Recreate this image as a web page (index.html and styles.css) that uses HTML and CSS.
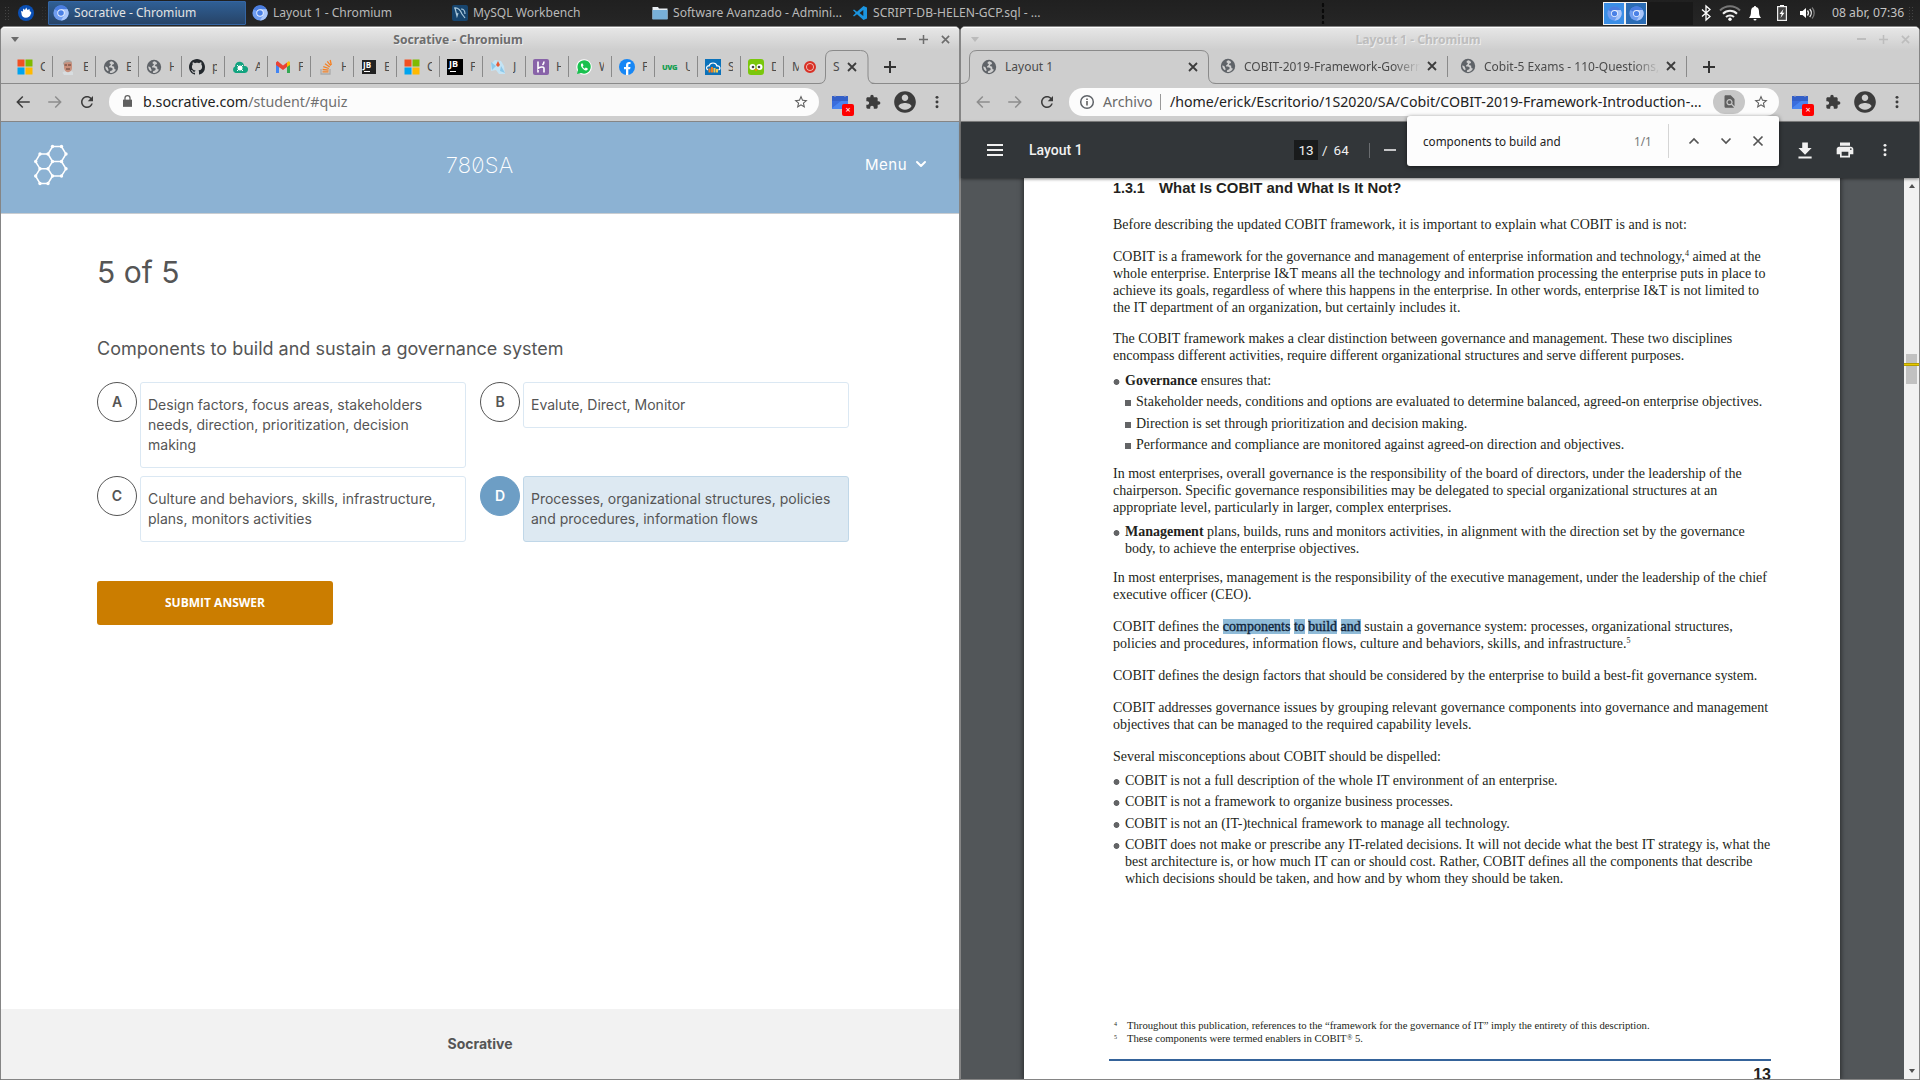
FILE: index.html
```html
<!DOCTYPE html>
<html lang="es">
<head>
<meta charset="utf-8">
<title>Escritorio</title>
<link rel="stylesheet" href="styles.css">
</head>
<body>
<svg class="defs" width="0" height="0">
  <symbol id="chromium" viewBox="0 0 16 16"><circle cx="8" cy="8" r="7.6" fill="#6f9df0"/><path d="M8 8 1.4 4.2A7.6 7.6 0 0 1 14.6 4.2L8 4.2z" fill="#4a7de0"/><path d="M8 4.2h6.6A7.6 7.6 0 0 1 8 15.6L11.3 10z" fill="#a9c6fa"/><circle cx="8" cy="8" r="3.7" fill="#eaf1ff"/><circle cx="8" cy="8" r="2.8" fill="#4a80e6"/></symbol>
  <symbol id="globe" viewBox="0 0 16 16"><circle cx="8" cy="8" r="7.2" fill="#5f6368"/><path d="M8.6 2.3c-1 .4-1.9.4-2.1 1.6-.1.8 1.6.8 1.4 1.9-.2 1-1.9.9-1.9 2.2 0 .9 2.6.5 3.4 1.2.9.8-.2 2.3-1.4 2.5-.8.2-1.4 1-1 2 .3.6 1.300.4 1.800.2 2-.5 3.400-1.700 4.200-3.500-.8.2-1.400 0-1.700-.8-.4-1 .3-1.300-.3-2-.6-.5-1.900-.2-2-1.200-.1-1.200 1.700-.8 2-1.600.3-.9-1.200-2.200-2.400-2.500zM2.200 7.400c.7-.1 1.700.3 2.400 1 .6.600.2 1.300.7 1.800.5.500.4 1.400-.3 2-1.400-.8-2.700-2.700-2.800-4.800z" fill="#cecece"/></symbol>
  <symbol id="back" viewBox="0 0 24 24"><path d="M21 11H6.830l5.590-5.590L11 4l-8 8 8 8 1.410-1.410L6.830 13H21v-2z"/></symbol>
  <symbol id="forward" viewBox="0 0 24 24"><path d="M3 11h14.170l-5.590-5.590L13 4l8 8-8 8-1.410-1.410L17.170 13H3v-2z"/></symbol>
  <symbol id="reload" viewBox="0 0 24 24"><path d="M17.650 6.350C16.200 4.900 14.210 4 12 4c-4.420 0-7.990 3.580-7.990 8s3.570 8 7.990 8c3.730 0 6.840-2.550 7.730-6h-2.080c-.82 2.330-3.040 4-5.650 4-3.310 0-6-2.690-6-6s2.690-6 6-6c1.660 0 3.140.69 4.220 1.780L13 11h7V4l-2.350 2.350z"/></symbol>
  <symbol id="star" viewBox="0 0 24 24"><path d="M22 9.240l-7.190-.62L12 2 9.190 8.630 2 9.240l5.460 4.730L5.820 21 12 17.270 18.180 21l-1.630-7.030L22 9.240zM12 15.400l-3.760 2.270 1-4.280-3.320-2.880 4.380-.38L12 6.100l1.710 4.040 4.380.38-3.320 2.880 1 4.280L12 15.400z"/></symbol>
  <symbol id="puzzle" viewBox="0 0 24 24"><path d="M20.500 11H19V7c0-1.100-.9-2-2-2h-4V3.500C13 2.120 11.880 1 10.500 1S8 2.120 8 3.500V5H4c-1.100 0-1.990.9-1.990 2v3.800H3.500c1.490 0 2.700 1.210 2.700 2.700s-1.210 2.700-2.700 2.700H2V20c0 1.100.9 2 2 2h3.800v-1.500c0-1.490 1.210-2.700 2.700-2.700 1.490 0 2.700 1.210 2.700 2.700V22H17c1.100 0 2-.9 2-2v-4h1.500c1.380 0 2.500-1.120 2.500-2.500S21.880 11 20.500 11z"/></symbol>
  <symbol id="person" viewBox="0 0 24 24"><path d="M12 2C6.480 2 2 6.480 2 12s4.480 10 10 10 10-4.480 10-10S17.520 2 12 2zm0 3c1.660 0 3 1.340 3 3s-1.340 3-3 3-3-1.340-3-3 1.340-3 3-3zm0 14.200c-2.500 0-4.710-1.280-6-3.220.03-1.990 4-3.080 6-3.080 1.990 0 5.970 1.090 6 3.080-1.290 1.940-3.500 3.220-6 3.220z"/></symbol>
  <symbol id="dots" viewBox="0 0 16 16"><circle cx="8" cy="2.700" r="1.700"/><circle cx="8" cy="8" r="1.700"/><circle cx="8" cy="13.300" r="1.700"/></symbol>
  <symbol id="close" viewBox="0 0 10 10"><path d="M1 1l8 8M9 1L1 9" fill="none" stroke="currentColor" stroke-width="1.800"/></symbol>
  <symbol id="plus" viewBox="0 0 12 12"><path d="M6 0v12M0 6h12" fill="none" stroke="currentColor" stroke-width="2"/></symbol>
  <symbol id="calendar" viewBox="0 0 16 16"><path d="M0 2h16v13H0z" fill="#4a86f0"/><path d="M0 2h16v5H0z" fill="#3460c8"/><path d="M0 7h9l-9 7z" fill="#3a6ddd"/><path d="M3 1v2M13 1v2" stroke="#aab"/></symbol>
  <symbol id="ms" viewBox="0 0 16 16"><path d="M.5.5h7v7h-7z" fill="#f25022"/><path d="M8.500.5h7v7h-7z" fill="#7fba00"/><path d="M.5 8.500h7v7h-7z" fill="#00a4ef"/><path d="M8.500 8.500h7v7h-7z" fill="#ffb900"/></symbol>
</svg>

<header class="panel">
  <span class="grip"></span>
  <svg class="whisker" viewBox="0 0 16 16"><circle cx="8" cy="8" r="8" fill="#0a4fb4"/><path d="M3 6l2 .5.2-3L7 5l1.200-2.500L9.500 5l2-1 .3 2.200c1.500.5 2 1.800 1 2.800-.7 2.500-2.500 3.800-4.800 3.800C5 12.800 3.500 11 3.500 8.500z" fill="#fff"/></svg>
  <span class="grip faint"></span>
  <nav class="tasks">
    <a class="task on"><svg><use href="#chromium"/></svg><span>Socrative - Chromium</span></a>
    <a class="task"><svg><use href="#chromium"/></svg><span>Layout 1 - Chromium</span></a>
    <a class="task"><svg viewBox="0 0 16 16"><rect width="16" height="16" rx="2" fill="#17456e"/><path d="M2 3c4-1 6 1 8 6l3 4M3 3l2 8 1-3M9 4c3 0 4 2 4 5" fill="none" stroke="#a9c8dc" stroke-width="1.200"/></svg><span>MySQL Workbench</span></a>
    <a class="task"><svg viewBox="0 0 16 16"><path d="M.5 2H6l1 1.500h8.500V14H.5z" fill="#e8eef3"/><path d="M.5 5h15v9.500H.5z" fill="#78b0d8"/></svg><span>Software Avanzado - Admini...</span></a>
    <a class="task"><svg viewBox="0 0 16 16"><path d="M11.500 1 15 2.500v11L11.500 15 5 9.300 2 11.500 1 10.800 3.700 8 1 5.200l1-.7 3 2.200zM11.300 5 7.500 8l3.800 3z" fill="#1b95e0" fill-rule="evenodd"/></svg><span>SCRIPT-DB-HELEN-GCP.sql - ...</span></a>
  </nav>
  <span class="handle"></span>
  <div class="pager"><i class="now"><svg><use href="#chromium"/></svg></i><i class="next"><svg><use href="#chromium"/></svg></i><i class="empty"></i></div>
  <div class="tray">
    <svg class="bt" viewBox="0 0 10 16"><path d="M1 4.500 9 11.500 5 15V1l4 3.500-8 7" fill="none" stroke="#fff" stroke-width="1.300"/></svg>
    <svg class="wifi" viewBox="0 0 22 16"><g fill="none" stroke-width="2"><path d="M1 5.500a14 14 0 0 1 20 0" stroke="#777"/><path d="M4 8.800a9.800 9.800 0 0 1 14 0M7 12a5.800 5.800 0 0 1 8 0" stroke="#eee"/></g><circle cx="11" cy="14.300" r="1.700" fill="#fff"/></svg>
    <svg class="bell" viewBox="0 0 12 16"><path d="M6 1c.7 0 1 .4 1 1 2.200.5 3 2.300 3 4.500 0 3 .5 4.500 2 6.500H0c1.500-2 2-3.500 2-6.500C2 4.300 2.800 2.500 5 2c0-.6.3-1 1-1zM4.500 14h3a1.500 1.500 0 0 1-3 0z" fill="#fff"/></svg>
    <svg class="batt" viewBox="0 0 10 16"><path d="M3 0h4v1.500H3z" fill="#fff"/><rect x=".6" y="1.600" width="8.800" height="13.800" fill="#444" stroke="#eee" stroke-width="1.200"/><path d="M6.500 4 2.500 9h2.200L3.500 13l4-5.200H5.300z" fill="#fff"/></svg>
    <svg class="vol" viewBox="0 0 16 14"><path d="M0 5h2.500L6 2v10L2.500 9H0z" fill="#fff"/><g fill="none" stroke-width="1.300"><path d="M7.500 4.500a4 4 0 0 1 0 5M9.700 3a6 6 0 0 1 0 8" stroke="#eee"/><path d="M12 1.500a8 8 0 0 1 0 11" stroke="#777"/></g></svg>
    <time>08 abr, 07:36</time>
    <span class="grip"></span>
  </div>
</header>

<main class="desk">
<section class="win left">
  <div class="titlebar"><i class="tri"></i><b>Socrative - Chromium</b><div class="wbtns"><i class="wmin"></i><svg><use href="#plus"/></svg><svg><use href="#close"/></svg></div></div>
  <div class="tabs">
    <div class="mini"><svg><use href="#ms"/></svg><span>C</span></div>
    <div class="mini"><svg viewBox="0 0 16 16"><path d="M4 16c-1-2-2-2-1-3l3-1h5l2 1v3z" fill="#d8dde0"/><path d="M4 4c0-3 8-3 8 0v5c0 5-7 6-8 0z" fill="#c98f7b"/><path d="M3 6c-1-6 10-7 9-1L11 3 5 3.500z" fill="#aaa6a2"/><path d="M4.500 6h2.500M8 6h3M6 10h4" stroke="#5c3c34"/></svg><span>E</span></div>
    <div class="mini"><svg><use href="#globe"/></svg><span>E</span></div>
    <div class="mini"><svg><use href="#globe"/></svg><span>H</span></div>
    <div class="mini"><svg viewBox="0 0 16 16"><path d="M8 0C3.580 0 0 3.580 0 8c0 3.540 2.290 6.530 5.470 7.590.4.070.55-.17.55-.38 0-.19-.01-.82-.01-1.490-2.010.37-2.530-.49-2.690-.94-.09-.23-.48-.94-.82-1.130-.28-.15-.68-.52-.01-.53.630-.01 1.080.58 1.230.82.720 1.210 1.870.87 2.330.66.070-.52.280-.87.510-1.070-1.780-.2-3.640-.89-3.640-3.950 0-.87.310-1.590.82-2.150-.08-.2-.36-1.020.08-2.120 0 0 .67-.21 2.200.82.640-.18 1.320-.27 2-.27s1.360.09 2 .27c1.530-1.040 2.200-.82 2.200-.82.440 1.100.16 1.920.08 2.120.510.56.82 1.270.82 2.150 0 3.070-1.870 3.750-3.650 3.950.290.25.540.73.540 1.480 0 1.070-.01 1.930-.01 2.200 0 .21.150.46.550.38A8.010 8.010 0 0 0 16 8c0-4.420-3.580-8-8-8z" fill="#24292e"/></svg><span>p</span></div>
    <div class="mini"><svg viewBox="0 0 16 16"><path d="M3.500 14a3.500 3.500 0 0 1-.5-6.500C3 4 6 2 9 3c2 .6 3 2 3 4 3-.3 4.500 2 4 4-.4 2-1.500 3-3.500 3z" fill="#12a37f"/><circle cx="8" cy="9" r="2.500" fill="#fff"/><path d="M5 6l6 6M11 6l-6 6" stroke="#fff"/></svg><span>A</span></div>
    <div class="mini"><svg viewBox="0 0 16 16"><path d="M1 3v11h3V7z" fill="#4285f4"/><path d="M15 3v11h-3V7z" fill="#34a853"/><path d="M1 3.500 2.500 2 8 6.500 12 3.500V8l-4 3-7-5z" fill="#ea4335"/><path d="M12 3.500 14 2l1 1.500V6l-3 2z" fill="#fbbc04"/></svg><span>F</span></div>
    <div class="mini"><svg viewBox="0 0 16 16"><path d="M3 10v5h9v-5" fill="none" stroke="#aaa" stroke-width="1.300"/><path d="M4.500 12.800h6M4.600 10.500l6 .7M5.300 7.600l5.500 1.900M7 4.800l4.700 3.200M9.300 2.400l3.400 4.300M12.200 1l1.100 5" stroke="#f48024" stroke-width="1.300" fill="none"/></svg><span>H</span></div>
    <div class="mini"><i class="jb small">JB</i><span>E</span></div>
    <div class="mini"><svg><use href="#ms"/></svg><span>C</span></div>
    <div class="mini"><i class="jb">JB</i><span>F</span></div>
    <div class="mini"><svg viewBox="0 0 16 16"><path d="M1 5l4-4 6 1 3 5 1 8H9L6 11 1 12z" fill="#c4e4f5"/><path d="M1 3l5 4-4 4M11 7l-1 5 5 2" fill="#8cc8ea"/><path d="M6 6l2-4 2 4-2 2z" fill="#e65a35"/></svg><span>J</span></div>
    <div class="mini"><svg viewBox="0 0 16 16"><rect width="16" height="16" rx="2" fill="#8863a8"/><path d="M5 2.500v7c1.500-1.300 6-2.500 6 0v4M11 2.500C11 4 10.500 5 9.500 6M5 11v2.500" fill="none" stroke="#fff" stroke-width="1.600"/></svg><span>H</span></div>
    <div class="mini"><svg viewBox="0 0 16 16"><circle cx="8" cy="8" r="7.800" fill="#fff"/><path d="M1 15l1-4C0 5 4 1.300 8.300 1.300c9 .4 8.500 13-.3 13.400l-3-.7z" fill="#19c14f"/><path d="M5.500 4.500c-2 2 1.500 6.500 4.500 7 1.500 0 2-1.500 1.700-2L9.800 8.600l-.9 1C8 9.400 6.900 8.200 6.700 7.400l.8-.9-.8-2z" fill="#fff"/></svg><span>W</span></div>
    <div class="mini"><svg viewBox="0 0 16 16"><circle cx="8" cy="8" r="8" fill="#1787f5"/><path d="M7 16v-5.700H5V8h2V6.300C7 4.100 8.300 3 10 3l1.500.1V5h-1C9.600 5 9.300 5.500 9.300 6.200V8h2.200l-.4 2.300H9.300V16z" fill="#fff"/></svg><span>F</span></div>
    <div class="mini"><i class="uvg">UVG</i><span>U</span></div>
    <div class="mini"><svg viewBox="0 0 16 16"><rect width="16" height="16" fill="#0b72ba"/><path d="M3 11C.5 10 1.500 6.500 4 7c1-4 7-4 8 0 3-.5 4 3 1.500 4" fill="none" stroke="#fff" stroke-width="1.200"/><path d="M4.500 9.500v4M7 8v5.500" stroke="#ee7d23" stroke-width="2"/><path d="M9.500 9v4.500M12 10v3.500" stroke="#f7c94b" stroke-width="2"/></svg><span>S</span></div>
    <div class="mini"><svg viewBox="0 0 16 16"><rect width="16" height="16" rx="3" fill="#7ac70c"/><circle cx="4.500" cy="8" r="3" fill="#fff"/><circle cx="11.500" cy="8" r="3" fill="#fff"/><circle cx="5" cy="8" r="1.300" fill="#444"/><circle cx="11" cy="8" r="1.300" fill="#444"/><path d="M6 10h4l-2 2.500z" fill="#f49000"/></svg><span>D</span></div>
    <div class="mini rec"><span>M</span><i></i></div>
    <div class="live narrow"><svg class="edge" viewBox="0 0 53 34"><path d="M0 33.500Q6.500 33.500 6.500 26V8Q6.500.5 14 .5H41.500Q49 .5 49 8V26Q49 33.500 53 33.500V34H0z" fill="#cecece"/><path d="M0 33.500Q6.500 33.500 6.500 26V8Q6.500.5 14 .5H41.500Q49 .5 49 8V26Q49 33.500 56 33.500" fill="none" stroke="#8a8a8a"/></svg><span>S</span><svg class="x"><use href="#close"/></svg></div>
    <svg class="add"><use href="#plus"/></svg>
  </div>
  <div class="toolbar">
    <svg class="nav"><use href="#back"/></svg><svg class="nav off"><use href="#forward"/></svg><svg class="nav"><use href="#reload"/></svg>
    <div class="omni"><svg class="lock" viewBox="0 0 10 13"><path d="M0 5h10v8H0z"/><path d="M2.200 6V3.300a2.800 2.800 0 0 1 5.600 0V6" fill="none" stroke="#5f5f5f" stroke-width="1.400"/></svg><span class="url">b.socrative.com<em>/student/#quiz</em></span><svg class="fav"><use href="#star"/></svg></div>
    <div class="ext"><svg><use href="#calendar"/></svg><i>×</i></div><svg class="puz"><use href="#puzzle"/></svg><svg class="who"><use href="#person"/></svg><svg class="more"><use href="#dots"/></svg>
  </div>
  <div class="soc-head">
    <svg class="logo" viewBox="0 0 34 42"><g fill="none" stroke="#fff" stroke-width="1.500"><path d="M18.500 2.500h9l4.500 7.500-4.500 7.500h-9L14 10zM6 10h8l4.500 7.500L14 24.800H6L1.500 17.500zM27.500 17.500 32 24.800 27.500 32h-9L14 24.800M18.500 32 14 39.500H6L1.500 32 6 24.800"/></g><g fill="#fff"><circle cx="18.500" cy="2.500" r="1.700"/><circle cx="27.500" cy="2.500" r="1.700"/><circle cx="32" cy="10" r="1.700"/><circle cx="27.500" cy="17.500" r="1.700"/><circle cx="18.500" cy="17.500" r="1.700"/><circle cx="14" cy="10" r="1.700"/><circle cx="6" cy="10" r="1.700"/><circle cx="1.700" cy="17.500" r="1.700"/><circle cx="6" cy="24.800" r="1.700"/><circle cx="14" cy="24.800" r="1.700"/><circle cx="32" cy="24.800" r="1.700"/><circle cx="27.500" cy="32" r="1.700"/><circle cx="18.500" cy="32" r="1.700"/><circle cx="14" cy="39.500" r="1.700"/><circle cx="6" cy="39.500" r="1.700"/><circle cx="1.700" cy="32" r="1.700"/></g></svg>
    <span class="room">780SA</span>
    <span class="menu">Menu<svg viewBox="0 0 10 7"><path d="M1 1l4 4 4-4" fill="none" stroke="#fff" stroke-width="2" stroke-linecap="round" stroke-linejoin="round"/></svg></span>
  </div>
  <div class="quiz">
    <h1>5 of 5</h1>
    <p class="ask">Components to build and sustain a governance system</p>
    <div class="answers">
      <div class="ans"><b>A</b><div>Design factors, focus areas, stakeholders<br>needs, direction, prioritization, decision<br>making</div></div>
      <div class="ans"><b>B</b><div>Evalute, Direct, Monitor</div></div>
      <div class="ans"><b>C</b><div>Culture and behaviors, skills, infrastructure,<br>plans, monitors activities</div></div>
      <div class="ans picked"><b>D</b><div>Processes, organizational structures, policies<br>and procedures, information flows</div></div>
    </div>
    <button class="submit">SUBMIT ANSWER</button>
  </div>
  <footer class="soc-foot">Socrative</footer>
</section>

<section class="win right">
  <div class="titlebar"><i class="tri"></i><b>Layout 1 - Chromium</b><div class="wbtns"><i class="wmin"></i><svg><use href="#plus"/></svg><svg><use href="#close"/></svg></div></div>
  <div class="tabs">
    <div class="live wide"><svg class="edge" viewBox="0 0 254 34"><path d="M0 33.500Q8.500 33.500 8.500 26V8Q8.500.5 16 .5H240Q247.500.5 247.500 8V26Q247.500 33.500 254 33.500V34H0z" fill="#cecece"/><path d="M0 33.500Q8.500 33.500 8.500 26V8Q8.500.5 16 .5H240Q247.500.5 247.500 8V26Q247.500 33.500 255 33.500" fill="none" stroke="#8a8a8a"/></svg><svg class="ico"><use href="#globe"/></svg><span>Layout 1</span><svg class="x"><use href="#close"/></svg></div>
    <div class="tab"><svg class="ico"><use href="#globe"/></svg><span>COBIT-2019-Framework-Governance</span><svg class="x"><use href="#close"/></svg></div>
    <div class="tab third"><svg class="ico"><use href="#globe"/></svg><span>Cobit-5 Exams - 110-Questions, answers</span><svg class="x"><use href="#close"/></svg></div>
    <svg class="add"><use href="#plus"/></svg>
  </div>
  <div class="toolbar">
    <svg class="nav off"><use href="#back"/></svg><svg class="nav off"><use href="#forward"/></svg><svg class="nav"><use href="#reload"/></svg>
    <div class="omni"><svg class="info" viewBox="0 0 16 16"><circle cx="8" cy="8" r="6.300" fill="none" stroke="#5f6368" stroke-width="1.500"/><path d="M7.200 7h1.600v4.500H7.200zM7.200 4.500h1.600V6H7.200z"/></svg><span class="scheme">Archivo</span><span class="url path">/home/erick/Escritorio/1S2020/SA/Cobit/COBIT-2019-Framework-Introduction-...</span><span class="pill"><svg viewBox="0 0 24 24"><path d="M20 19.590V8l-6-6H6c-1.100 0-1.990.9-1.990 2L4 20c0 1.100.89 2 1.990 2H18c.45 0 .85-.15 1.190-.4l-4.430-4.430c-.8.520-1.740.830-2.760.830-2.760 0-5-2.240-5-5s2.240-5 5-5 5 2.240 5 5c0 1.020-.31 1.960-.83 2.750L20 19.590zM9 13c0 1.660 1.340 3 3 3s3-1.340 3-3-1.340-3-3-3-3 1.340-3 3z"/></svg></span><svg class="fav"><use href="#star"/></svg></div>
    <div class="ext"><svg><use href="#calendar"/></svg><i>×</i></div><svg class="puz"><use href="#puzzle"/></svg><svg class="who"><use href="#person"/></svg><svg class="more"><use href="#dots"/></svg>
  </div>
  <div class="pdf-bar">
    <i class="burger"></i><b>Layout 1</b>
    <div class="pages"><span class="cur">13</span><span class="of">/</span><span>64</span></div><i class="vline"></i><i class="minus"></i>
    <div class="actions"><svg viewBox="0 0 24 24"><path d="M19 9h-4V3H9v6H5l7 7 7-7zM5 18v2h14v-2H5z" transform="translate(-1.500 -.5) scale(1.130)"/></svg><svg viewBox="0 0 24 24"><path d="M19 8H5c-1.660 0-3 1.340-3 3v6h4v4h12v-4h4v-6c0-1.660-1.340-3-3-3zm-3 11H8v-5h8v5zm3-7c-.55 0-1-.45-1-1s.45-1 1-1 1 .45 1 1-.45 1-1 1zm-1-9H6v4h12V3z"/></svg><svg class="kebab"><use href="#dots"/></svg></div>
  </div>
  <div class="find"><span>components to build and</span><em>1/1</em><i></i><svg viewBox="0 0 10 10"><path d="M.5 7.500 5 3l4.500 4.500"/></svg><svg viewBox="0 0 10 10"><path d="M.5 2.500 5 7l4.500-4.500"/></svg><svg viewBox="0 0 10 10"><path d="M.5.5l9 9M9.500.5l-9 9"/></svg></div>
  <div class="viewer">
    <article class="page">
      <h2><span>1.3.1</span>What Is COBIT and What Is It Not?</h2>
      <p class="g16">Before describing the updated COBIT framework, it is important to explain what COBIT is and is not:</p>
      <p class="g15">COBIT is a framework for the governance and management of enterprise information and technology,<sup>4</sup> aimed at the<br>whole enterprise. Enterprise I&amp;T means all the technology and information processing the enterprise puts in place to<br>achieve its goals, regardless of where this happens in the enterprise. In other words, enterprise I&amp;T is not limited to<br>the IT department of an organization, but certainly includes it.</p>
      <p class="g15">The COBIT framework makes a clear distinction between governance and management. These two disciplines<br>encompass different activities, require different organizational structures and serve different purposes.</p>
      <p class="dot g7"><b>Governance</b> ensures that:</p>
      <p class="sq g5">Stakeholder needs, conditions and options are evaluated to determine balanced, agreed-on enterprise objectives.</p>
      <p class="sq g5">Direction is set through prioritization and decision making.</p>
      <p class="sq g5">Performance and compliance are monitored against agreed-on direction and objectives.</p>
      <p class="g12">In most enterprises, overall governance is the responsibility of the board of directors, under the leadership of the<br>chairperson. Specific governance responsibilities may be delegated to special organizational structures at an<br>appropriate level, particularly in larger, complex enterprises.</p>
      <p class="dot g7"><b>Management</b> plans, builds, runs and monitors activities, in alignment with the direction set by the governance<br>body, to achieve the enterprise objectives.</p>
      <p class="g12">In most enterprises, management is the responsibility of the executive management, under the leadership of the chief<br>executive officer (CEO).</p>
      <p class="g15">COBIT defines the <mark>components</mark> <mark>to</mark> <mark>build</mark> <mark>and</mark> sustain a governance system: processes, organizational structures,<br>policies and procedures, information flows, culture and behaviors, skills, and infrastructure.<sup>5</sup></p>
      <p class="g15">COBIT defines the design factors that should be considered by the enterprise to build a best-fit governance system.</p>
      <p class="g15">COBIT addresses governance issues by grouping relevant governance components into governance and management<br>objectives that can be managed to the required capability levels.</p>
      <p class="g15">Several misconceptions about COBIT should be dispelled:</p>
      <p class="dot g7">COBIT is not a full description of the whole IT environment of an enterprise.</p>
      <p class="dot g5">COBIT is not a framework to organize business processes.</p>
      <p class="dot g5">COBIT is not an (IT-)technical framework to manage all technology.</p>
      <p class="dot g5">COBIT does not make or prescribe any IT-related decisions. It will not decide what the best IT strategy is, what the<br>best architecture is, or how much IT can or should cost. Rather, COBIT defines all the components that describe<br>which decisions should be taken, and how and by whom they should be taken.</p>
      <div class="notes"><p><sup>4</sup>Throughout this publication, references to the “framework for the governance of IT” imply the entirety of this description.</p><p><sup>5</sup>These components were termed enablers in COBIT<small>®</small> 5.</p></div>
      <div class="folio">13</div>
    </article>
    <div class="scroll"><i class="up"></i><i class="thumb"></i><i class="hit"></i><i class="down"></i></div>
  </div>
</section>
</main>
</body>
</html>
```
FILE: styles.css
```css
* { box-sizing: border-box; }
body { margin: 0; width: 1920px; height: 1080px; overflow: hidden; background: #232323; font-family: "Noto Sans", sans-serif; font-size: 13px; display: flex; flex-direction: column; }
svg { flex: none; display: block; overflow: visible; }
i, em { font-style: normal; }
.defs { position: absolute; }

/* desktop panel */
.panel { height: 26px; flex: none; display: flex; align-items: center; background: linear-gradient(#202020, #262626); color: #b9b9b9; }
.grip { width: 6px; height: 14px; margin-left: 4px; background: radial-gradient(circle, #444 .7px, transparent 1px) 0 0 / 3px 3px; }
.whisker { width: 16px; height: 16px; margin-left: 8px; }
.grip.faint { margin-left: 7px; margin-right: 1px; opacity: .4; }
.tasks { display: flex; width: 1000px; height: 24px; gap: 2px; font-size: 12.100px; }
.task { width: 198px; height: 24px; display: flex; align-items: center; gap: 5px; padding: 0 0 1px 4px; white-space: nowrap; line-height: 20px; }
.task svg { width: 16px; height: 16px; }
.task.on { background: linear-gradient(#2f5f95, #274468); border: 1px solid #3465a4; padding: 0 0 0 4px; color: #e4e4e4; border-radius: 1px; }
.handle { width: 4px; height: 22px; margin-left: 273px; background: radial-gradient(#0a0a0a 1.2px, transparent 1.6px) 0 0 / 4px 6px; }
.pager { display: flex; margin-left: 278px; height: 23px; }
.pager i { width: 22px; height: 23px; display: grid; place-items: center; border: 1px solid #f1f1f1; background: #3a8ee6; }
.pager i.next { background: #2a6cb5; }
.pager i.empty { width: 46px; border: 0; background: #191919; }
.pager svg { width: 15px; height: 15px; }
.tray { display: flex; align-items: center; margin-left: 8px; color: #c4c4c4; }
.bt { width: 10px; height: 16px; }
.wifi { width: 22px; height: 16px; margin-left: 8px; }
.bell { width: 12px; height: 16px; margin-left: 8px; }
.batt { width: 10px; height: 16px; margin-left: 16px; }
.vol { width: 16px; height: 14px; margin-left: 13px; }
.tray time { margin-left: 16px; white-space: nowrap; width: 72px; font-size: 12.200px; line-height: 20px; padding-bottom: 1px; }

/* window frame */
.desk { display: flex; height: 1054px; }
.win { width: 960px; height: 1054px; background: #cecece; border: 1px solid #858585; border-radius: 5px 5px 0 0; display: flex; flex-direction: column; position: relative; }
.titlebar { height: 23px; flex: none; display: flex; align-items: center; justify-content: space-between; background: linear-gradient(#e6e6e6, #cecece); border-top: 1px solid #fff; border-radius: 4px 4px 0 0; padding: 0 9px 0 10px; color: #6d6d6d; }
.titlebar b { font-size: 12.100px; text-shadow: 1px 1px #eee; padding-top: 1px; margin-left: 44px; margin-right: 44px; }
.tri { border: 4px solid transparent; border-top: 5px solid #6b6b6b; border-bottom: 0; margin-right: 0; }
.wbtns { display: flex; align-items: center; gap: 13px; }
.wbtns svg { width: 9px; height: 9px; }
.wmin { width: 9px; height: 2px; background: currentColor; }
.right .titlebar { color: #bdbdbd; }
.right .tri { border-top-color: #bbb; }
.titlebar .tri { flex: none; }
.titlebar b { position: static; }
.tabs { height: 34px; flex: none; display: flex; align-items: center; border-bottom: 1px solid #8a8a8a; color: #4b4b4b; font-size: 12px; }
.left .tabs { padding-left: 9px; }
.mini { width: 43px; height: 21px; border-right: 1px solid #8a8a8a; display: flex; align-items: center; padding: 0 0 0 7px; }
.mini svg { width: 16px; height: 16px; }
.mini span { width: 5px; margin-left: 7px; overflow: hidden; line-height: 21px; }
.jb { width: 16px; height: 16px; color: #fff; font: 700 9px/10px "Open Sans", sans-serif; padding-left: 2px; background: linear-gradient(#fff, #fff) 3px 12px / 6px 1px no-repeat #000; }
.jb.small { width: 14px; height: 14px; margin: 0 1px; font-size: 8px; padding-left: 1px; background-color: #222; background-position: 2px 11px; }
.uvg { width: 16px; font: 800 7.500px/16px "Open Sans", sans-serif; color: #16a052; letter-spacing: -.4px; }
.mini.rec { border: 0; padding-left: 6px; width: 42px; }
.mini.rec span { width: 7px; margin: 0 5px 0 2px; }
.mini.rec i { width: 12px; height: 12px; border-radius: 50%; background: #d93025; border: 2px solid #d93025; box-shadow: inset 0 0 0 1px #eebbb6; }
.live { position: relative; height: 34px; align-self: flex-start; display: flex; align-items: center; padding-bottom: 1px; }
.edge { position: absolute; left: 0; top: 0; height: 34px; z-index: 0; }
.live > :not(.edge) { position: relative; z-index: 1; }
.narrow { width: 53px; margin-left: -7px; }
.narrow .edge { width: 53px; }
.narrow span { margin-left: 14px; width: 8px; }
.narrow .x { margin-left: 6px; }
.x { width: 10px; height: 10px; color: #3c3c3c; }
.left .add { margin-left: 12px; }
.add { width: 12px; height: 12px; color: #333; }
.wide { width: 248px; }
.wide .edge { width: 254px; }
.ico { width: 16px; height: 16px; }
.wide .ico { margin-left: 20px; }
.live span, .tab span { white-space: nowrap; }
.wide span { margin-left: 8px; width: 183px; }
.tab { display: flex; align-items: center; width: 239px; height: 21px; border-right: 1px solid #8a8a8a; padding: 0 0 1px 11px; }
.tab span { margin-left: 8px; width: 176px; overflow: hidden; -webkit-mask-image: linear-gradient(90deg, #000 85%, transparent); mask-image: linear-gradient(90deg, #000 85%, transparent); }
.tab .x { margin-left: 7px; }
.tab.third { padding-left: 12px; }
.tab.third .x { margin-left: 6px; }
.right .add { margin-left: 16px; }
.toolbar { height: 38px; flex: none; display: flex; align-items: center; padding: 0 0 2px 12px; border-bottom: 1px solid #858585; fill: #3c3c3c; }
.nav { width: 20px; height: 20px; margin-right: 12px; padding: 1px; }
.nav.off { fill: #8d8d8d; }
.omni { width: 710px; height: 28px; border-radius: 14px; background: #fcfcfc; display: flex; align-items: center; fill: #5f5f5f; }
.lock { width: 9px; height: 12px; margin: 0 0 1px 14px; }
.url { font-size: 14.250px; line-height: 28px; margin-left: 11px; color: #222; flex: 1; white-space: nowrap; }
.url em { color: #707070; }
.fav { width: 16px; height: 16px; margin-right: 10px; }
.info { width: 16px; height: 16px; margin-left: 10px; }
.scheme { font-size: 14.200px; color: #6a6a6a; margin-left: 8px; padding-right: 6px; border-right: 1px solid #999; line-height: 16px; width: 58px; }
.url.path { margin-left: 9px; font-size: 14.180px; }
.pill { width: 32px; height: 24px; border-radius: 12px; background: #c7c7c7; display: grid; place-items: center; margin-right: 8px; }
.pill svg { width: 15px; height: 15px; }
.ext { width: 22px; height: 28px; margin-left: 13px; position: relative; }
.ext svg { width: 16px; height: 16px; margin-top: 6px; }
.ext i { position: absolute; left: 10px; top: 16px; width: 12px; height: 12px; border-radius: 2px; background: #f00; color: #fff; font: 9px/11px "Noto Sans", sans-serif; text-align: center; }
.puz { width: 16px; height: 16px; margin-left: 11px; }
.who { width: 26px; height: 26px; margin-left: 11px; }
.more { width: 14px; height: 14px; margin-left: 12px; }

/* quiz page */
.soc-head { height: 92px; flex: none; background: #8cb2d3; border-bottom: 1px solid #c9cdd1; display: flex; align-items: center; justify-content: space-between; padding: 0 33px 3px; color: #fff; font-family: Inter, sans-serif; }
.logo { width: 34px; height: 42px; margin-bottom: 3px; }
.room { font: 200 22px/30px Inter, sans-serif; font-feature-settings: "zero"; letter-spacing: .2px; margin-left: 26px; padding-bottom: 2px; }
.menu { display: flex; align-items: center; gap: 9px; font-size: 15px; letter-spacing: .5px; width: 61px; padding-bottom: 3px; }
.menu svg { width: 10px; height: 7px; }
.quiz { flex: 1; background: #fff; padding: 38px 0 0 96px; font-family: Inter, sans-serif; color: #555; }
h1 { font-size: 30px; font-weight: 400; line-height: 40px; margin: 0; }
.ask { margin: 42px 0 0; font-size: 18px; line-height: 30px; }
.answers { display: grid; grid-template-columns: 383px 369px; row-gap: 8px; margin-top: 18px; align-items: start; }
.ans { display: flex; gap: 3px; align-items: flex-start; }
.ans b { width: 40px; height: 40px; border: 1px solid #555; border-radius: 50%; display: grid; place-items: center; font-size: 14px; font-weight: 600; padding-bottom: 1px; }
.ans div { width: 326px; border: 1px solid #dbe8f3; border-radius: 3px; padding: 12px 7px; font-size: 14px; line-height: 20px; white-space: nowrap; }
.picked b { background: #6d9ec5; border-color: #6d9ec5; color: #fff; }
.picked div { background: #dde9f2; border-color: #c0d7e8; }
.submit { display: block; margin-top: 39px; width: 236px; height: 44px; border: 0; border-radius: 3px; background: #cb7d00; color: #fff; font: 700 12px/44px "Open Sans", sans-serif; padding: 0; }
.soc-foot { height: 70px; flex: none; background: #f2f2f2; font: 700 14px/70px Inter, sans-serif; color: #555; text-align: center; }

/* pdf viewer */
.pdf-bar { height: 56px; flex: none; background: #323639; color: #f1f1f1; display: flex; align-items: center; padding: 0 24px 0 26px; font: 13.500px Roboto, sans-serif; fill: #f1f1f1; position: relative; z-index: 2; box-shadow: 0 1px 3px rgba(0,0,0,.5); }
.pdf-bar b { font-weight: 500; font-size: 14px; margin-left: 26px; width: 265px; }
.burger { width: 16px; height: 12px; background: linear-gradient(#f1f1f1 2px, transparent 2px 5px, #f1f1f1 5px 7px, transparent 7px 10px, #f1f1f1 10px); }
.pages { display: flex; align-items: center; }
.cur { background: #191b1c; width: 24px; height: 20px; line-height: 20px; text-align: center; }
.of { margin: 0 6px 0 4px; }
.vline { width: 1px; height: 15px; background: #6a6d70; margin-left: 20px; }
.minus { width: 12px; height: 2px; background: #c5c6c7; margin-left: 14px; }
.actions { display: flex; gap: 20px; margin-left: auto; }
.actions svg { width: 20px; height: 20px; }
.actions .kebab { width: 14px; height: 14px; margin: 3px; }
.find { position: absolute; z-index: 3; left: 446px; top: 89px; width: 372px; height: 50px; background: #fdfdfd; border-radius: 3px; box-shadow: 0 1px 4px rgba(0,0,0,.55); display: flex; align-items: center; padding: 0 0 1px 16px; color: #222; font-size: 11.700px; }
.find span { width: 211px; flex: none; }
.find em { color: #777; width: 34px; flex: none; }
.find i { width: 1px; height: 34px; background: #d5d5d5; margin-right: 20px; flex: none; }
.find svg { width: 10px; height: 10px; margin-right: 22px; fill: none; stroke: #555; stroke-width: 1.700; }
.viewer { flex: 1; min-height: 0; background: #525659; display: flex; justify-content: space-between; overflow: hidden; }
.page { width: 816px; margin-left: 63px; padding: 0 0 0 89px; background: #fff; box-shadow: 0 0 5px 1px rgba(0,0,0,.5); font-family: "Liberation Serif", serif; font-size: 14px; line-height: 16.900px; color: #231f20; white-space: nowrap; }
h2 { margin: 0; padding-top: 1px; font: 700 14.900px/18px "Liberation Sans", sans-serif; }
h2 span { display: inline-block; width: 46px; font-size: 14.300px; }
.page p { margin: 0; }
.page .g16 { margin-top: 20px; }
.page .g15 { margin-top: 14.950px; }
.page .g12 { margin-top: 12.200px; }
.page .g7 { margin-top: 7.600px; }
.page .g5 { margin-top: 4.500px; }
sup { font-size: 8px; line-height: 0; vertical-align: 5px; }
.dot, .sq { display: block; padding-left: 12px; background: radial-gradient(circle at 3.500px 9px, #636466 2.500px, transparent 3.300px); }
.sq { padding-left: 23px; background: linear-gradient(#636466, #636466) 12px 6px / 6px 6px no-repeat; }
mark { color: #10243a; background: #8fbbd8; line-height: 1; -webkit-text-stroke: .35px #10243a; }
.notes { margin-top: 131px; font-size: 10.690px; line-height: 13px; }
.notes sup { display: inline-block; width: 14px; font-size: 6px; vertical-align: 3px; padding-left: 1px; }
.notes small { font-size: 7.500px; vertical-align: 2px; line-height: 0; }
.folio { margin: 14px 69px 0 -4px; padding-top: 2px; border-top: 2px solid #35639a; text-align: right; font: 700 16px/24px "Liberation Sans", sans-serif; }
.scroll { width: 15px; background: #f1f1f1; display: flex; flex-direction: column; align-items: center; position: relative; }
.up { margin-top: 6px; border: 3.500px solid transparent; border-bottom: 4px solid #505050; border-top: 0; }
.thumb { margin-top: 166px; width: 11px; height: 30px; background: #c1c1c1; }
.hit { position: absolute; left: 0; right: 0; top: 185px; height: 3px; background: #e6c800; border: 1px solid #b59d00; border-width: 1px 0; }
.down { margin-top: auto; margin-bottom: 6px; border: 3.500px solid transparent; border-top: 4px solid #505050; border-bottom: 0; }
```
